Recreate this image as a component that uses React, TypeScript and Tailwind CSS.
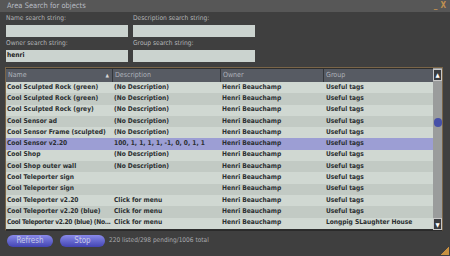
import React from 'react';

const rows = [
  { name: 'Cool Sculpted Rock (green)', desc: '(No Description)', group: 'Useful tags' },
  { name: 'Cool Sculpted Rock (green)', desc: '(No Description)', group: 'Useful tags' },
  { name: 'Cool Sculpted Rock (grey)', desc: '(No Description)', group: 'Useful tags' },
  { name: 'Cool Sensor ad', desc: '(No Description)', group: 'Useful tags' },
  { name: 'Cool Sensor Frame (sculpted)', desc: '(No Description)', group: 'Useful tags' },
  { name: 'Cool Sensor v2.20', desc: '100, 1, 1, 1, 1, -1, 0, 0, 1, 1', group: 'Useful tags', selected: true },
  { name: 'Cool Shop', desc: '(No Description)', group: 'Useful tags' },
  { name: 'Cool Shop outer wall', desc: '(No Description)', group: 'Useful tags' },
  { name: 'Cool Teleporter sign', desc: '', group: 'Useful tags' },
  { name: 'Cool Teleporter sign', desc: '', group: 'Useful tags' },
  { name: 'Cool Teleporter v2.20', desc: 'Click for menu', group: 'Useful tags' },
  { name: 'Cool Teleporter v2.20 (blue)', desc: 'Click for menu', group: 'Useful tags' },
  { name: 'Cool Teleporter v2.20 (blue) (No...', desc: 'Click for menu', group: 'Longpig SLaughter House', tight: true },
];

function Field({ label, value }: { label: string; value?: string }) {
  return (
    <div className="flex flex-col">
      <div className="h-[12px] flex items-end text-[6.6px] text-[#b4b6b8]">{label}</div>
      <div className="mt-[1px] h-[12px] bg-[#cbd3cf] text-[6.6px] font-bold text-[#202020] flex items-center pl-[1px]">
        {value}
      </div>
    </div>
  );
}

export default function App() {
  return (
    <div
      className="w-[450px] h-[256px] bg-[#3f3f3f] flex flex-col overflow-hidden"
      style={{ fontFamily: '"DejaVu Sans Condensed", "DejaVu Sans", sans-serif' }}
    >
      {/* title bar */}
      <div className="h-[12px] bg-[#575757] flex items-center justify-between pl-[7px] pr-[4px]">
        <span className="text-[7.5px] text-[#b8bcc4] leading-none">Area Search for objects</span>
        <div className="flex items-center gap-[3px] text-[#c09050] text-[8px] leading-none font-bold">
          <span>_</span>
          <span>X</span>
        </div>
      </div>

      {/* search fields */}
      <div className="grid grid-cols-[122px_122px] gap-x-[5px] px-[6px]">
        <Field label="Name search string:" />
        <Field label="Description search string:" />
        <Field label="Owner search string:" value="henri" />
        <Field label="Group search string:" />
      </div>

      {/* list */}
      <div className="mt-[5px] ml-[5px] w-[438px] h-[165px] border border-[#7a6548] border-b-[#2a2a2a] bg-[#2e2e2e] flex">
        <div className="w-[427px] flex flex-col pt-[1px]">
          <div className="h-[13px] bg-[#575b63] grid grid-cols-[107px_108px_103px_109px] text-[7px] text-[#aeb2ba]">
            <div className="flex items-center justify-between pl-[2px] pr-[3px] border-r border-[#33363b]">
              <span>Name</span>
              <span className="text-[5px] text-[#d8d8d8]">▲</span>
            </div>
            <div className="flex items-center pl-[2px] border-r border-[#33363b]">Description</div>
            <div className="flex items-center pl-[2px] border-r border-[#33363b]">Owner</div>
            <div className="flex items-center pl-[2px]">Group</div>
          </div>
          {rows.map((r, i) => (
            <div
              key={i}
              className={
                'h-[11.3px] grid grid-cols-[107px_108px_103px_109px] text-[6.6px] font-bold text-[#2a2e30] items-center whitespace-nowrap overflow-hidden ' +
                (r.selected ? 'bg-[#9c9ed4]' : i % 2 === 0 ? 'bg-[#d0d8d2]' : 'bg-[#c2cac4]')
              }
            >
              <div className={'pl-[1px] overflow-hidden ' + (r.tight ? 'tracking-[-0.3px]' : '')}>{r.name}</div>
              <div className="pl-[1px] overflow-hidden">{r.desc}</div>
              <div className="pl-[1px] overflow-hidden">Henri Beauchamp</div>
              <div className="pl-[2px] overflow-hidden">{r.group}</div>
            </div>
          ))}
        </div>
        {/* scrollbar */}
        <div className="flex-1 bg-[#9a9c9c] flex flex-col justify-between pt-[1px]">
          <div className="h-[12px] bg-[#3a3c40] border border-[#c8c8c8] flex items-center justify-center text-[6px] text-white">▲</div>
          <div className="flex-1 relative">
            <div className="absolute left-[1px] top-[37px] w-[8px] h-[9px] rounded-full bg-[#4650a8]" />
          </div>
          <div className="h-[12px] bg-[#3a3c40] border border-[#c8c8c8] flex items-center justify-center text-[6px] text-white">▼</div>
        </div>
      </div>

      {/* bottom bar */}
      <div className="flex items-center mt-[4px] pl-[7px] gap-[7px]">
        <button className="w-[46px] h-[12px] rounded-full bg-gradient-to-b from-[#8a8ae8] to-[#4444b4] text-[8px] text-[#c8cae8] leading-none">
          Refresh
        </button>
        <button className="w-[45px] h-[12px] rounded-full bg-gradient-to-b from-[#8a8ae8] to-[#4444b4] text-[8px] text-[#c8cae8] leading-none">
          Stop
        </button>
        <span className="text-[6.5px] text-[#a8aaae] -ml-[3px]">220 listed/298 pending/1006 total</span>
        <div className="flex-1" />
      </div>
      <div className="flex justify-end pr-[1px] mt-auto pb-[1px]">
        <div className="w-[8px] h-[8px] bg-gradient-to-br from-transparent from-50% to-[#c89040] to-50%" />
      </div>
    </div>
  );
}
